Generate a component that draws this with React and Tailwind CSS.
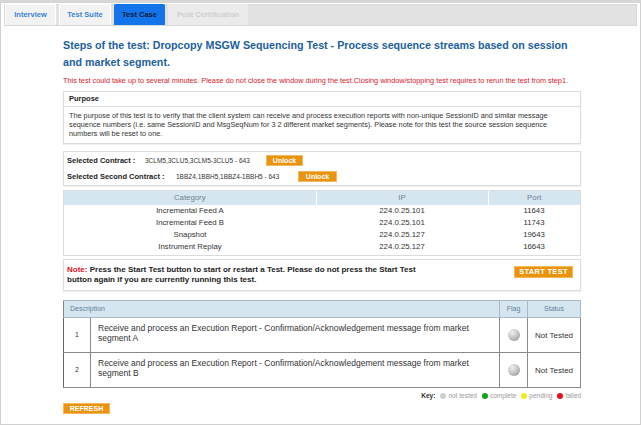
import React from "react";

const tabs = [
  { label: "Interview", state: "normal", w: "w-[51px]" },
  { label: "Test Suite", state: "normal", w: "w-[52px]" },
  { label: "Test Case", state: "active", w: "w-[51px]" },
  { label: "Post Certification", state: "disabled", w: "w-[80px]" },
];

const feeds = [
  ["Incremental Feed A", "224.0.25.101", "11643"],
  ["Incremental Feed B", "224.0.25.101", "11743"],
  ["Snapshot", "224.0.25.127", "19643"],
  ["Instrument Replay", "224.0.25.127", "16643"],
];

const steps = [
  "Receive and process an Execution Report - Confirmation/Acknowledgement message from market segment A",
  "Receive and process an Execution Report - Confirmation/Acknowledgement message from market segment B",
];

const OrangeButton = ({ children, className = "" }) => (
  <button
    className={`bg-[#e9930f] text-white font-bold leading-none border border-[#f3b860] whitespace-nowrap ${className}`}
  >
    {children}
  </button>
);

const Dot = ({ color }) => (
  <span
    className="inline-block w-[6px] h-[6px] rounded-full mr-[2px] align-[-1px]"
    style={{ background: color }}
  />
);

export default function App() {
  return (
    <div className="w-[641px] h-[425px] bg-white border border-[#d0d0d0] border-t-[3px] border-t-[#d6d6d6] font-['Liberation_Sans',Arial,sans-serif] text-[#222] overflow-hidden">
      {/* Tabs */}
      <div className="mx-[3px] mt-[1px] h-[22px] bg-[#e2e2e2] border border-[#d8d8d8] flex items-end gap-[3px]">
        {tabs.map((t) => (
          <div
            key={t.label}
            className={
              "h-[21px] flex items-center justify-center text-[7.5px] font-bold whitespace-nowrap " +
              t.w +
              " " +
              (t.state === "active"
                ? "bg-[#1474ea] text-[#0d1d3a] rounded-t-[2px]"
                : t.state === "disabled"
                ? "bg-[#ebebeb] text-[#cfcfcf]"
                : "bg-[#f2f2f2] text-[#3a82d4] border-t border-x border-white")
            }
          >
            {t.label}
          </div>
        ))}
      </div>

      <div className="ml-[62px] w-[518px]">
        {/* Title */}
        <h1 className="mt-[11px] text-[10.7px] leading-[17px] font-bold text-[#21609e]">
          Steps of the test: Dropcopy MSGW Sequencing Test - Process sequence streams based on session and market segment.
        </h1>

        <p className="mt-[5px] text-[7.3px] leading-[9px] text-[#d3202a] whitespace-nowrap">
          This test could take up to several minutes. Please do not close the window during the test.Closing window/stopping test requires to rerun the test from step1.
        </p>

        {/* Purpose */}
        <div className="mt-[6px] border border-[#dcdcdc] shadow-[0_1px_1px_rgba(0,0,0,0.06)]">
          <div className="h-[15px] px-[5px] flex items-center text-[7.5px] font-bold border-b border-[#dcdcdc]">
            Purpose
          </div>
          <p className="px-[5px] pt-[4px] pb-[5px] text-[7.3px] leading-[9px] text-[#333]">
            The purpose of this test is to verify that the client system can receive and process execution reports with non-unique SessionID and similar message sequence numbers (i.e. same SessionID and MsgSeqNum for 3 2 different market segments). Please note for this test the source session sequence numbers will be reset to one.
          </p>
        </div>

        {/* Contracts */}
        <div className="mt-[7px] h-[35px] border border-[#dcdcdc] px-[3px] flex flex-col justify-center gap-[5px] shadow-[0_1px_1px_rgba(0,0,0,0.06)]">
          <div className="flex items-center">
            <span className="text-[7.5px] font-bold w-[78px] whitespace-nowrap">Selected Contract :</span>
            <span className="text-[6.5px] text-[#333] w-[121px] whitespace-nowrap">3CLM5,3CLU5,3CLM5-3CLU5 - 643</span>
            <OrangeButton className="w-[37px] h-[11px] text-[7px]">Unlock</OrangeButton>
          </div>
          <div className="flex items-center">
            <span className="text-[7.5px] font-bold w-[109px] whitespace-nowrap">Selected Second Contract :</span>
            <span className="text-[6.5px] text-[#333] w-[122px] whitespace-nowrap">1BBZ4,1BBH5,1BBZ4-1BBH5 - 643</span>
            <OrangeButton className="w-[39px] h-[11px] text-[7px]">Unlock</OrangeButton>
          </div>
        </div>

        {/* Feeds table */}
        <div className="mt-[4px] border border-[#dcdcdc] pb-[2px]">
          <table className="w-full border-collapse text-[7.8px]">
            <thead>
              <tr className="bg-[#d6e6f1] text-[#6d8292] h-[14px]">
                <th className="font-normal w-[252px] border-r border-white">Category</th>
                <th className="font-normal w-[172px] border-r border-white">IP</th>
                <th className="font-normal">Port</th>
              </tr>
            </thead>
            <tbody className="text-[#333]">
              {feeds.map((f) => (
                <tr key={f[0]} className="text-center">
                  <td className="h-[12px] leading-[12px] p-0">{f[0]}</td>
                  <td className="h-[12px] leading-[12px] p-0">{f[1]}</td>
                  <td className="h-[12px] leading-[12px] p-0">{f[2]}</td>
                </tr>
              ))}
            </tbody>
          </table>
        </div>

        {/* Note */}
        <div className="mt-[3px] h-[32px] border border-[#dcdcdc] px-[3px] flex items-center justify-between shadow-[0_1px_1px_rgba(0,0,0,0.06)]">
          <p className="text-[8px] leading-[10px] font-bold w-[356px]">
            <span className="text-[#e0141e]">Note:</span>{" "}
            <span>
              Press the Start Test button to start or restart a Test. Please do not press the Start Test button again if you are currently running this test.
            </span>
          </p>
          <OrangeButton className="w-[59px] h-[12px] text-[7.5px] tracking-[0.3px] mr-[4px] mb-[6px]">
            START TEST
          </OrangeButton>
        </div>

        {/* Steps table */}
        <table className="mt-[9px] w-full border-collapse text-[8.5px]">
          <thead>
            <tr className="bg-[#d6e6f1] text-[#62809a] h-[17px]">
              <th colSpan={2} className="font-normal text-left pl-[6px] text-[7px] border border-[#a8b8c4] border-l-[#888]">
                Description
              </th>
              <th className="font-normal w-[28px] text-[7px] border border-[#a8b8c4] border-l-[#777]">Flag</th>
              <th className="font-normal w-[53px] text-[7px] border border-[#a8b8c4] border-l-[#777]">Status</th>
            </tr>
          </thead>
          <tbody className="text-[#333]">
            {steps.map((s, i) => (
              <tr key={i}>
                <td className="h-[34px] w-[27px] text-center text-[7px] border border-[#8a8a8a] border-l-[#666]">{i + 1}</td>
                <td className="pl-[7px] pr-[20px] pt-[5px] pb-[9px] leading-[10px] align-top border border-[#8a8a8a]">
                  {s}
                </td>
                <td className="text-center border border-[#8a8a8a]">
                  <span
                    className="inline-block w-[12px] h-[12px] rounded-full mt-[3px]"
                    style={{
                      background:
                        "radial-gradient(circle at 35% 30%, #f0f0f0 0%, #bdbdbd 55%, #858585 100%)",
                    }}
                  />
                </td>
                <td className="text-center text-[8px] border border-[#8a8a8a] pt-[2px] whitespace-nowrap">Not Tested</td>
              </tr>
            ))}
          </tbody>
        </table>

        {/* Key */}
        <div className="mt-[3px] flex justify-end items-center text-[6.5px] text-[#9a9a9a] gap-[5px]">
          <span className="font-bold text-[#333]">Key:</span>
          <span><Dot color="#cfcfcf" />not tested</span>
          <span><Dot color="#16a316" />complete</span>
          <span><Dot color="#f2ea1c" />pending</span>
          <span><Dot color="#e5121b" />failed</span>
        </div>

        <OrangeButton className="mt-[2px] w-[47px] h-[11px] text-[7px] block">REFRESH</OrangeButton>
      </div>
    </div>
  );
}
